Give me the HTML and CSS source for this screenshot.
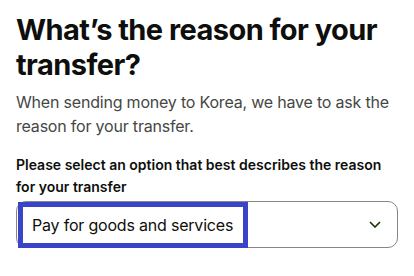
FILE: index.html
```html
<!DOCTYPE html>
<html lang="en">
<head>
    <meta charset="UTF-8">
    <meta name="viewport" content="width=device-width, initial-scale=1.0">
    <title>Transfer reason</title>
    <link rel="stylesheet" href="styles.css">
</head>
<body>
    <div class="page">
        <h1 class="title">What’s the reason for your transfer?</h1>
        <p class="intro">When sending money to Korea, we have to ask the reason for your transfer.</p>

        <label class="field-label" for="reason">Please select an option that best describes the reason for your transfer</label>
        <div class="select" id="reason">
            <span class="select-value">Pay for goods and services</span>
            <svg class="chevron" width="12" height="7" viewBox="0 0 12 7" aria-hidden="true">
                <path d="M1 1l5 5 5-5" fill="none" stroke="#163300" stroke-width="1.6"/>
            </svg>
        </div>
    </div>
</body>
</html>
```

FILE: styles.css
```css
body {
    margin: 0;
    font-family: Inter, "Noto Sans", sans-serif;
    color: #0e0f0c;
    background: #fff;
    letter-spacing: -0.2px;
}

.page {
    padding: 12px 16px;
}

.title {
    margin: 0;
    font-size: 29px;
    line-height: 35px;
    font-weight: 700;
    letter-spacing: -0.55px;
}

.intro {
    margin: 8px 0 0;
    font-size: 16px;
    line-height: 24px;
    color: #454745;
}

.field-label {
    display: block;
    margin-top: 16px;
    font-size: 14px;
    line-height: 22px;
    font-weight: 600;
    letter-spacing: 0;
}

.select {
    display: flex;
    align-items: center;
    justify-content: space-between;
    height: 45px;
    margin-top: 3px;
    border: 1px solid #868685;
    border-radius: 10px;
    padding-right: 16px;
}

.select-value {
    display: flex;
    align-items: center;
    height: 36px;
    margin-left: 1px;
    padding: 0 10px 0 9px;
    border: 5px solid #3a44c9;
    font-size: 16px;
}

.chevron {
    display: block;
}
```
